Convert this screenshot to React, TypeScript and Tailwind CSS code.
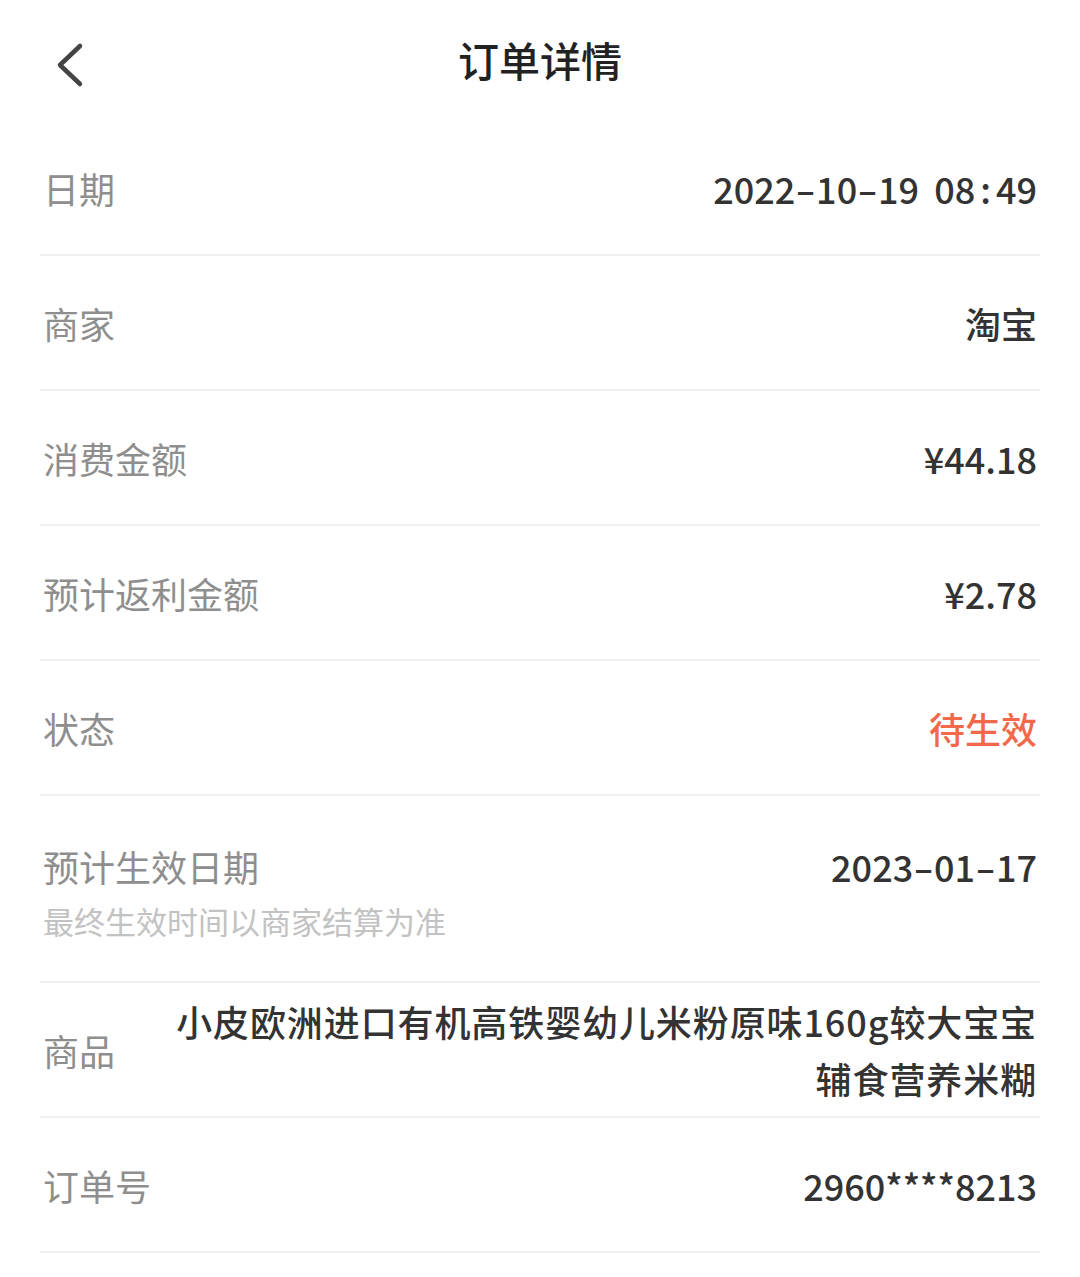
import React from 'react';

const FONT = { fontFamily: '"Noto Sans CJK SC", "Noto Sans", sans-serif' };

type Row = { label: string; value: string; tone?: 'accent' };

const rowsTop: Row[] = [
  { label: '日期', value: '2022-10-19 08:49' },
  { label: '商家', value: '淘宝' },
  { label: '消费金额', value: '¥44.18' },
  { label: '预计返利金额', value: '¥2.78' },
  { label: '状态', value: '待生效', tone: 'accent' },
];

// the phone font draws wide dashes and roomy colons; widen them a little
const spaced = (text: string) =>
  text.split(/([-: ])/).map((part, i) => {
    if (part === '-')
      return (
        <span key={i} className="inline-block origin-center scale-x-[1.6] px-[4px]">
          -
        </span>
      );
    if (part === ':')
      return (
        <span key={i} className="px-[5px]">
          :
        </span>
      );
    if (part === ' ')
      return (
        <span key={i} className="pl-[7px]">
          {' '}
        </span>
      );
    return part;
  });

const InfoRow = ({ label, value, tone }: Row) => (
  <div className="flex h-[135px] items-center justify-between border-b-2 border-[#f0f0f0] pl-[3px] pr-[3px]">
    <span className="text-[36px] leading-[44px] text-[#8e8e8e]">{label}</span>
    <span
      className={
        tone === 'accent'
          ? 'text-[36px] leading-[44px] font-medium text-[#f1684a]'
          : 'text-[36px] leading-[44px] font-medium text-[#333333]'
      }
    >
      {spaced(value)}
    </span>
  </div>
);

export default function App() {
  return (
    <div className="min-h-[1277px] w-[1080px] bg-white" style={FONT}>
      <header className="relative flex h-[121px] items-center justify-center">
        <button className="absolute left-[50px] top-[38px] p-1" aria-label="返回">
          <svg width="30" height="46" viewBox="0 0 30 46" fill="none">
            <path
              d="M26 4 L6 23 L26 42"
              stroke="#444"
              strokeWidth="4.5"
              strokeLinecap="round"
              strokeLinejoin="round"
            />
          </svg>
        </button>
        <h1 className="text-[41px] font-medium leading-none text-[#222] -mt-[2px]">订单详情</h1>
      </header>

      <div className="mx-[40px]">
        {rowsTop.map((r) => (
          <InfoRow key={r.label} {...r} />
        ))}

        <div className="flex h-[187px] justify-between border-b-2 border-[#f0f0f0] pl-[3px] pr-[3px] pt-[48px]">
          <div className="flex flex-col">
            <span className="text-[36px] leading-[44px] text-[#8e8e8e]">预计生效日期</span>
            <span className="mt-[13px] text-[31px] leading-[40px] text-[#c2c2c2]">最终生效时间以商家结算为准</span>
          </div>
          <span className="text-[36px] leading-[44px] font-medium text-[#333333]">{spaced('2023-01-17')}</span>
        </div>

        <div className="flex h-[135px] items-center justify-between border-b-2 border-[#f0f0f0] pl-[3px] pr-[3px]">
          <span className="shrink-0 text-[36px] leading-[44px] text-[#8e8e8e]">商品</span>
          <span className="max-w-[866px] text-right text-[36px] leading-[57px] tracking-[0.9px] font-medium text-[#333333]">
            小皮欧洲进口有机高铁婴幼儿米粉原味160g较大宝宝辅食营养米糊
          </span>
        </div>

        <InfoRow label="订单号" value="2960****8213" />
      </div>
    </div>
  );
}
